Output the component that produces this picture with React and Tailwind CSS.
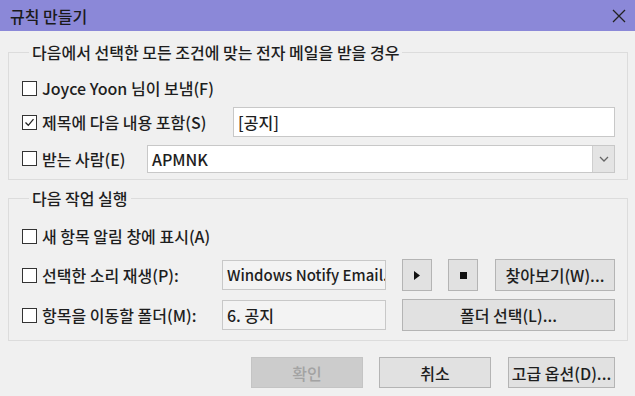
import React from "react";

function Check({ checked }) {
  return (
    <span className="w-[15px] h-[15px] border border-[#333333] bg-white flex items-center justify-center shrink-0">
      {checked && (
        <svg width="11" height="11" viewBox="0 0 11 11">
          <path d="M1.5 5.5 L4.3 8.3 L9.5 2.2" fill="none" stroke="#222" strokeWidth="1.3" />
        </svg>
      )}
    </span>
  );
}

function CheckLabel({ checked, children, className = "" }) {
  return (
    <div className={"flex items-center gap-[5px] " + className}>
      <Check checked={checked} />
      <span className="whitespace-nowrap">{children}</span>
    </div>
  );
}

function Btn({ children, className = "", disabled }) {
  return (
    <div
      className={
        "flex items-center justify-center border whitespace-nowrap " +
        (disabled
          ? "bg-[#cccccc] border-[#c4c4c4] text-[#a3a3a3] "
          : "bg-[#e1e1e1] border-[#b4b4b4] text-[#1e1e1e] ") +
        className
      }
    >
      {children}
    </div>
  );
}

export default function App() {
  return (
    <div className="w-[635px] h-[396px] bg-[#f0f0f0] text-[#1e1e1e] text-[16px] font-medium leading-[20px] font-['Noto_Sans_CJK_KR','Noto_Sans',sans-serif] overflow-hidden flex flex-col">
      <div className="h-[31px] bg-[#8b88d8] flex items-center justify-between pl-[10px] pr-[9px] shrink-0">
        <span className="text-[16px] text-[#1a1a1a]">규칙 만들기</span>
        <svg width="14" height="14" viewBox="0 0 14 14">
          <path d="M1 1 L13 13 M13 1 L1 13" stroke="#222" strokeWidth="1.3" fill="none" />
        </svg>
      </div>

      <div className="flex flex-col px-[8px] pr-[7px] pt-[11px]">
        <fieldset className="border border-[#dcdcdc] pl-[13px] pr-[12px] pb-[6px] m-0">
          <legend className="ml-[7px] px-[3px] text-[#1e1e1e]">다음에서 선택한 모든 조건에 맞는 전자 메일을 받을 경우</legend>
          <div className="flex flex-col pt-[16px]">
            <CheckLabel className="h-[20px]">Joyce Yoon 님이 보냄(F)</CheckLabel>
            <div className="flex items-center h-[30px] mt-[9px]">
              <CheckLabel checked className="w-[211px]">제목에 다음 내용 포함(S)</CheckLabel>
              <div className="flex-1 h-[30px] bg-white border border-[#c8c8c8] flex items-center pl-[4px]">[공지]</div>
            </div>
            <div className="flex items-center h-[29px] mt-[7px]">
              <CheckLabel className="w-[125px]">받는 사람(E)</CheckLabel>
              <div className="flex-1 h-[28px] bg-white border border-[#c8c8c8] flex items-center pl-[4px]">
                <span className="flex-1">APMNK</span>
                <div className="w-[22px] h-[26px] bg-[#e4e4e4] border-l border-[#cfcfcf] flex items-center justify-center">
                  <svg width="10" height="6" viewBox="0 0 10 6">
                    <path d="M1 1 L5 5 L9 1" stroke="#666" strokeWidth="1.3" fill="none" />
                  </svg>
                </div>
              </div>
            </div>
          </div>
        </fieldset>

        <fieldset className="border border-[#dcdcdc] pl-[13px] pr-[12px] pb-[9px] mt-[8px] m-0">
          <legend className="ml-[7px] px-[3px]">다음 작업 실행</legend>
          <div className="flex flex-col pt-[18px]">
            <CheckLabel className="h-[20px]">새 항목 알림 창에 표시(A)</CheckLabel>
            <div className="flex items-center h-[32px] mt-[13px]">
              <CheckLabel className="w-[200px]">선택한 소리 재생(P):</CheckLabel>
              <div className="w-[164px] h-[30px] border border-[#c8c8c8] bg-[#f3f3f3] flex items-center pl-[4px] overflow-hidden whitespace-nowrap text-[15px]">Windows Notify Email.wav</div>
              <Btn className="w-[30px] h-[32px] ml-[16px]">
                <svg width="6" height="9" viewBox="0 0 6 9"><path d="M0 0 L6 4.5 L0 9 Z" fill="#111" /></svg>
              </Btn>
              <Btn className="w-[30px] h-[32px] ml-[16px]">
                <span className="w-[7px] h-[7px] bg-[#111]" />
              </Btn>
              <Btn className="flex-1 h-[32px] ml-[17px]">찾아보기(W)...</Btn>
            </div>
            <div className="flex items-center h-[32px] mt-[8px]">
              <CheckLabel className="w-[200px]">항목을 이동할 폴더(M):</CheckLabel>
              <div className="w-[164px] h-[30px] border border-[#c8c8c8] bg-[#f3f3f3] flex items-center pl-[4px]">6. 공지</div>
              <Btn className="flex-1 h-[32px] ml-[16px]">폴더 선택(L)...</Btn>
            </div>
          </div>
        </fieldset>

        <div className="flex justify-end items-center mt-[16px] pr-[13px]">
          <Btn disabled className="w-[112px] h-[31px]">확인</Btn>
          <Btn className="w-[112px] h-[31px] ml-[16px]">취소</Btn>
          <Btn className="w-[107px] h-[31px] ml-[17px]">고급 옵션(D)...</Btn>
        </div>
      </div>
    </div>
  );
}
